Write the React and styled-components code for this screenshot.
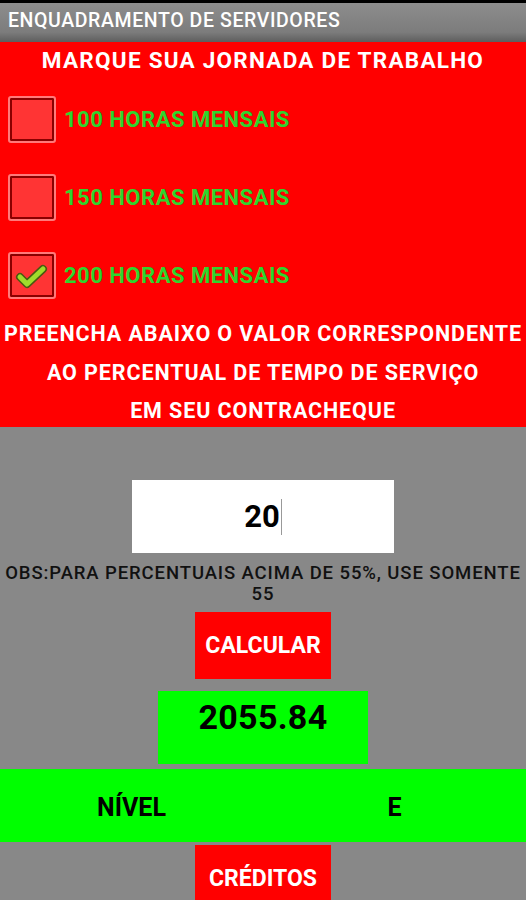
import React from 'react';
import styled, { createGlobalStyle } from 'styled-components';

const GlobalStyle = createGlobalStyle`
  body {
    margin: 0;
    background: #888888;
    font-family: Roboto, "Liberation Sans", sans-serif;
  }
`;

const OPTIONS = [
  { label: '100 HORAS MENSAIS', checked: false },
  { label: '150 HORAS MENSAIS', checked: false },
  { label: '200 HORAS MENSAIS', checked: true },
];

const App = () => (
  <Screen>
    <GlobalStyle />
    <StatusBar />
    <TitleBar>ENQUADRAMENTO DE SERVIDORES</TitleBar>
    <RedPanel>
      <Heading>MARQUE SUA JORNADA DE TRABALHO</Heading>
      <Options>
        {OPTIONS.map((o) => (
          <OptionRow key={o.label}>
            <Box>
              {o.checked && (
                <svg width="34" height="26" viewBox="0 0 34 26">
                  <polyline points="5,14 12,21 28,6" fill="none" stroke="#4a5a10" strokeWidth="8" strokeLinecap="round" strokeLinejoin="round" />
                  <polyline points="5,14 12,21 28,6" fill="none" stroke="#9fdc2c" strokeWidth="5" strokeLinecap="round" strokeLinejoin="round" />
                </svg>
              )}
            </Box>
            <OptionLabel>{o.label}</OptionLabel>
          </OptionRow>
        ))}
      </Options>
      <Instructions>
        PREENCHA ABAIXO O VALOR CORRESPONDENTE
        <br />
        AO PERCENTUAL DE TEMPO DE SERVIÇO
        <br />
        EM SEU CONTRACHEQUE
      </Instructions>
    </RedPanel>
    <GrayPanel>
      <ValueInput>
        20<Caret />
      </ValueInput>
      <Note>
        OBS:PARA PERCENTUAIS ACIMA DE 55%, USE SOMENTE
        <br />
        55
      </Note>
      <RedButton>CALCULAR</RedButton>
      <Result>2055.84</Result>
      <LevelBar>
        <LevelCell>NÍVEL</LevelCell>
        <LevelCell>E</LevelCell>
      </LevelBar>
      <RedButton $top={3}>CRÉDITOS</RedButton>
    </GrayPanel>
  </Screen>
);

const Screen = styled.div`
  width: 526px;
  height: 900px;
  overflow: hidden;
  background: #888888;
`;

const StatusBar = styled.div`
  height: 3px;
  background: #000;
`;

const TitleBar = styled.div`
  height: 39px;
  box-sizing: border-box;
  padding: 0 0 4px 8px;
  display: flex;
  align-items: center;
  color: #fff;
  font-size: 19.5px;
  letter-spacing: 0.6px;
  font-weight: 500;
  background: linear-gradient(#8d8d8d, #7c7c7c 75%, #5e5e5e);
`;

const RedPanel = styled.div`
  background: #ff0000;
  height: 385px;
  display: flex;
  flex-direction: column;
`;

const Heading = styled.div`
  margin-top: 5px;
  text-align: center;
  color: #fff;
  font-size: 22.5px;
  letter-spacing: 1.25px;
  font-weight: 700;
  line-height: 26px;
`;

const Options = styled.div`
  margin-top: 23px;
  display: flex;
  flex-direction: column;
  gap: 31px;
`;

const OptionRow = styled.div`
  display: flex;
  align-items: center;
  height: 47px;
  padding-left: 8px;
  gap: 8px;
`;

const Box = styled.div`
  width: 48px;
  height: 47px;
  box-sizing: border-box;
  border: 2px solid #ff7a7a;
  border-radius: 3px;
  background: #ff3434;
  box-shadow: inset 0 0 0 2px #8a0000;
  display: flex;
  align-items: center;
  justify-content: center;
`;

const OptionLabel = styled.div`
  color: #2ed52e;
  font-size: 22px;
  letter-spacing: 0.5px;
  font-weight: 700;
`;

const Instructions = styled.div`
  margin-top: 16px;
  text-align: center;
  color: #fff;
  font-size: 21.5px;
  letter-spacing: 0.9px;
  font-weight: 700;
  line-height: 38.5px;
  white-space: nowrap;
`;

const GrayPanel = styled.div`
  display: flex;
  flex-direction: column;
  align-items: center;
  padding-top: 53px;
`;

const ValueInput = styled.div`
  flex-shrink: 0;
  width: 262px;
  height: 73px;
  background: #fff;
  display: flex;
  align-items: center;
  justify-content: center;
  font-size: 31px;
  font-weight: 700;
  color: #000;
`;

const Caret = styled.span`
  display: inline-block;
  width: 1px;
  height: 36px;
  background: #999;
  margin-left: 1px;
`;

const Note = styled.div`
  margin-top: 10px;
  text-align: center;
  color: #111;
  font-size: 18.5px;
  letter-spacing: 0.9px;
  font-weight: 500;
  line-height: 21px;
  white-space: nowrap;
`;

const RedButton = styled.div`
  flex-shrink: 0;
  margin-top: ${(p) => (p.$top != null ? p.$top : 7)}px;
  width: 136px;
  height: 67px;
  background: #ff0000;
  color: #fff;
  font-size: 23px;
  font-weight: 700;
  display: flex;
  align-items: center;
  justify-content: center;
`;

const Result = styled.div`
  flex-shrink: 0;
  margin-top: 12px;
  width: 210px;
  height: 73px;
  background: #00ff00;
  color: #000;
  font-size: 34px;
  letter-spacing: 0.3px;
  font-weight: 700;
  text-align: center;
  line-height: 52px;
`;

const LevelBar = styled.div`
  flex-shrink: 0;
  margin-top: 5px;
  align-self: stretch;
  height: 73px;
  background: #00ff00;
  display: grid;
  grid-template-columns: 1fr 1fr;
  align-items: center;
  padding-top: 4px;
  box-sizing: border-box;
`;

const LevelCell = styled.div`
  text-align: center;
  color: #000;
  font-size: 25px;
  font-weight: 700;
`;

export default App;
